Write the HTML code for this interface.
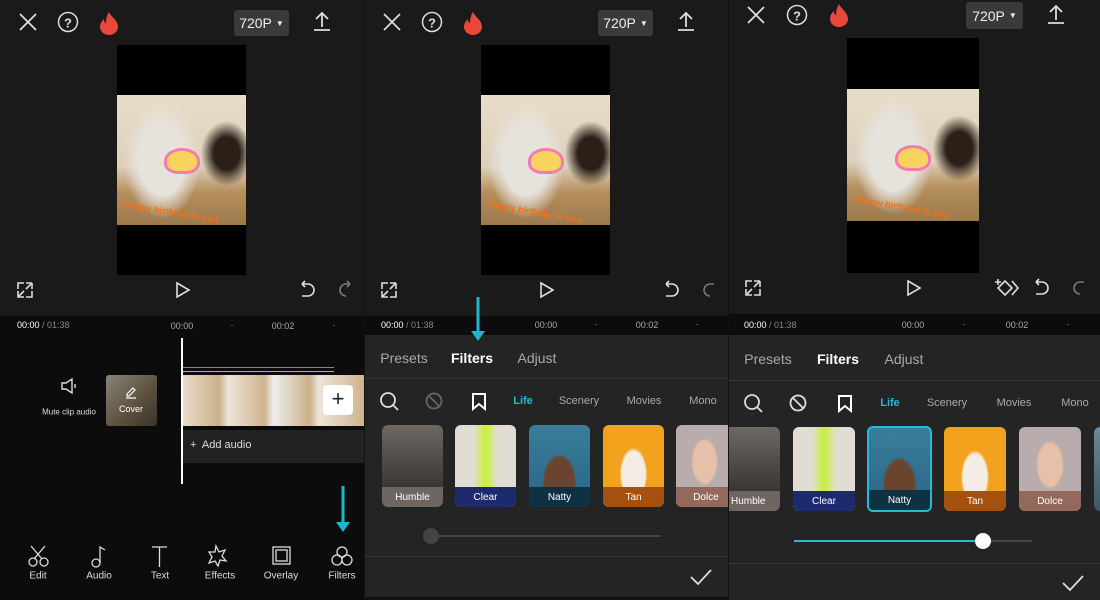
<!DOCTYPE html>
<html><head><meta charset="utf-8"><style>
*{margin:0;padding:0;box-sizing:border-box}
body{width:1100px;height:600px;overflow:hidden;background:#1a1a1a;font-family:"Liberation Sans",sans-serif;position:relative;color:#fff}
.a{position:absolute}
.t{position:absolute;white-space:nowrap;transform:translate(-50%,-50%)}
.btn{position:absolute;background:#3a3a3a;border-radius:3px;font-size:14px;color:#eee;display:flex;align-items:center;justify-content:center;gap:4px}
.vid{position:absolute;background:#000}
.img{position:absolute;background:radial-gradient(ellipse 30% 45% at 35% 50%,#e6e2dc 60%,transparent 100%),radial-gradient(ellipse 20% 25% at 85% 45%,#2a2018 50%,transparent 100%),linear-gradient(#e9ddc9 0%,#ddd0bb 55%,#b58e5c 75%,#9c7a4c 100%)}
.cake{position:absolute;width:36px;height:26px;background:#f9d45c;border:3px solid #f27bb0;border-radius:50% 50% 40% 40%}
.hb{position:absolute;font-size:9px;font-weight:bold;color:#f2701c;transform:rotate(10deg);white-space:nowrap}
.th{position:absolute;border-radius:6px;overflow:hidden}
.th .l{position:absolute;left:0;right:0;bottom:0;height:20px;font-size:10px;color:#fff;display:flex;align-items:center;justify-content:center}
.g{color:#aaa}
</style></head><body>

<div class="a" style="left:0;top:316px;width:364px;height:284px;background:#0c0c0c"></div>
<div class="a" style="left:364px;top:316px;width:364px;height:19px;background:#0c0c0c"></div>
<div class="a" style="left:364px;top:335px;width:364px;height:265px;background:#242424"></div>
<div class="a" style="left:728px;top:314px;width:372px;height:21px;background:#0c0c0c"></div>
<div class="a" style="left:728px;top:335px;width:372px;height:265px;background:#242424"></div>
<div class="a" style="left:364px;top:0;width:1px;height:600px;background:#111"></div>
<div class="a" style="left:728px;top:0;width:1px;height:600px;background:#111"></div>

<svg class="a" style="left:0;top:0" width="1100" height="310" fill="none" stroke="#ddd" stroke-width="1.8">
 <g>
  <path d="M20 14l16 16M36 14l-16 16"/>
  <circle cx="68" cy="22" r="9.5" stroke-width="1.5"/>
  <path d="M322 13v14M316 19l6-6 6 6M314 30h16"/>
 </g>
 <g transform="translate(364,0)">
  <path d="M20 14l16 16M36 14l-16 16"/>
  <circle cx="68" cy="22" r="9.5" stroke-width="1.5"/>
  <path d="M322 13v14M316 19l6-6 6 6M314 30h16"/>
 </g>
 <g transform="translate(728,-7)">
  <path d="M20 14l16 16M36 14l-16 16"/>
  <circle cx="69" cy="22" r="9.5" stroke-width="1.5"/>
  <path d="M328 13v14M322 19l6-6 6 6M320 30h16"/>
 </g>
 <g stroke-width="1.6">
  <path d="M18 289v-6h6M32 283v6M26 283h6M18 291v6h6M32 291v6h-6M19 296l5-5M31 284l-5 5"/>
  <path d="M177 283l12 7-12 7z"/>
  <path d="M302 284h6a6 6 0 0 1 0 12h-6M302 284l3-3M302 284l3 3"/>
  <path stroke="#777" d="M350 284h-4a6 6 0 0 0 0 12"/>
  <path d="M350 284l-3-3M350 284l-3 3" stroke="#777"/>
 </g>
 <g stroke-width="1.6" transform="translate(364,0)">
  <path d="M18 289v-6h6M32 283v6M26 283h6M18 291v6h6M32 291v6h-6M19 296l5-5M31 284l-5 5"/>
  <path d="M177 283l12 7-12 7z"/>
  <path d="M302 284h6a6 6 0 0 1 0 12h-6M302 284l3-3M302 284l3 3"/>
  <path stroke="#777" d="M350 284h-4a6 6 0 0 0 0 12"/>
 </g>
 <g stroke-width="1.6" transform="translate(728,-2)">
  <path d="M18 289v-6h6M32 283v6M26 283h6M18 291v6h6M32 291v6h-6M19 296l5-5M31 284l-5 5"/>
  <path d="M180 283l12 7-12 7z"/>
  <path d="M270 290l7-7 7 7-7 7zM284 283l6 7-6 7M270 281v6M267 284h6"/>
  <path d="M308 284h6a6 6 0 0 1 0 12h-6M308 284l3-3M308 284l3 3"/>
  <path stroke="#777" d="M356 284h-4a6 6 0 0 0 0 12"/>
 </g>
</svg>
<div class="t" style="left:68px;top:23px;font-size:13px;color:#ddd;font-weight:bold">?</div>
<div class="t" style="left:432px;top:23px;font-size:13px;color:#ddd;font-weight:bold">?</div>
<div class="t" style="left:797px;top:16px;font-size:13px;color:#ddd;font-weight:bold">?</div>
<svg class="a" style="left:99px;top:11px" width="20" height="24"><path d="M10 1c2 5 9 8 9 15a9 8 0 0 1-18 0c0-4 2-6 4-8 0 3 1 4 2 4 0-4 1-8 3-11z" fill="#e8483a"/></svg>
<svg class="a" style="left:463px;top:11px" width="20" height="24"><path d="M10 1c2 5 9 8 9 15a9 8 0 0 1-18 0c0-4 2-6 4-8 0 3 1 4 2 4 0-4 1-8 3-11z" fill="#e8483a"/></svg>
<svg class="a" style="left:829px;top:3px" width="20" height="24"><path d="M10 1c2 5 9 8 9 15a9 8 0 0 1-18 0c0-4 2-6 4-8 0 3 1 4 2 4 0-4 1-8 3-11z" fill="#e8483a"/></svg>
<div class="btn" style="left:234px;top:10px;width:55px;height:26px">720P <span style="font-size:8px">▼</span></div>
<div class="btn" style="left:598px;top:10px;width:55px;height:26px">720P <span style="font-size:8px">▼</span></div>
<div class="btn" style="left:966px;top:2px;width:57px;height:27px">720P <span style="font-size:8px">▼</span></div>

<div class="vid" style="left:117px;top:45px;width:129px;height:230px"></div>
<div class="img" style="left:117px;top:95px;width:129px;height:130px"></div>
<div class="cake" style="left:164px;top:148px"></div><div class="hb" style="left:124px;top:207px">Happy birthday to you</div>
<div class="vid" style="left:481px;top:45px;width:129px;height:230px"></div>
<div class="img" style="left:481px;top:95px;width:129px;height:130px"></div>
<div class="cake" style="left:528px;top:148px"></div><div class="hb" style="left:488px;top:207px">Happy birthday to you</div>
<div class="vid" style="left:847px;top:38px;width:132px;height:235px"></div>
<div class="img" style="left:847px;top:89px;width:132px;height:132px"></div>
<div class="cake" style="left:895px;top:145px"></div><div class="hb" style="left:855px;top:202px">Happy birthday to you</div>

<div class="a" style="left:17px;top:320px;font-size:9px"><span>00:00</span><span style="color:#888"> / 01:38</span></div>
<div class="t" style="left:182px;top:326px;font-size:9px;color:#aaa">00:00</div>
<div class="t" style="left:232px;top:325px;font-size:9px;color:#aaa">·</div>
<div class="t" style="left:283px;top:326px;font-size:9px;color:#aaa">00:02</div>
<div class="t" style="left:334px;top:325px;font-size:9px;color:#aaa">·</div>
<div class="a" style="left:381px;top:320px;font-size:9px"><span>00:00</span><span style="color:#888"> / 01:38</span></div>
<div class="t" style="left:546px;top:325px;font-size:9px;color:#aaa">00:00</div>
<div class="t" style="left:596px;top:324px;font-size:9px;color:#aaa">·</div>
<div class="t" style="left:647px;top:325px;font-size:9px;color:#aaa">00:02</div>
<div class="t" style="left:697px;top:324px;font-size:9px;color:#aaa">·</div>
<div class="a" style="left:744px;top:320px;font-size:9px"><span>00:00</span><span style="color:#888"> / 01:38</span></div>
<div class="t" style="left:913px;top:325px;font-size:9px;color:#aaa">00:00</div>
<div class="t" style="left:964px;top:324px;font-size:9px;color:#aaa">·</div>
<div class="t" style="left:1017px;top:325px;font-size:9px;color:#aaa">00:02</div>
<div class="t" style="left:1068px;top:324px;font-size:9px;color:#aaa">·</div>

<svg class="a" style="left:60px;top:378px" width="20" height="16" fill="none" stroke="#ddd" stroke-width="1.4"><path d="M2 5h4l6-4v14l-6-4H2z M15 6v4"/></svg>
<div class="t" style="left:69px;top:412px;font-size:8px;color:#ddd">Mute clip audio</div>
<div class="a" style="left:106px;top:375px;width:51px;height:51px;border-radius:3px;background:linear-gradient(135deg,#8a8478,#5b4e3e 60%,#3a3428)"></div>
<svg class="a" style="left:124px;top:385px" width="14" height="14" fill="none" stroke="#fff" stroke-width="1.2"><path d="M3 9l6-6 2 2-6 6H3zM2 13h10"/></svg>
<div class="t" style="left:131px;top:409px;font-size:9px;color:#fff">Cover</div>
<div class="a" style="left:183px;top:367px;width:151px;height:1px;background:#e0604a"></div>
<div class="a" style="left:183px;top:371px;width:151px;height:1px;background:#e8a060"></div>
<div class="a" style="left:183px;top:375px;width:181px;height:51px;background:linear-gradient(90deg,#e9dccb 0,#cbb08a 20%,#ede5da 25%,#cfb38f 45%,#eee 50%,#cbb08a 70%,#ede5da 75%,#cfb38f 100%)"></div>
<div class="a" style="left:323px;top:385px;width:30px;height:30px;background:#fff;border-radius:4px;color:#222;font-size:22px;line-height:28px;text-align:center">+</div>
<div class="a" style="left:183px;top:430px;width:181px;height:33px;background:#222"></div>
<div class="a" style="left:190px;top:439px;font-size:11px;color:#ddd">+&nbsp; Add audio</div>
<div class="a" style="left:181px;top:338px;width:2px;height:146px;background:#fff"></div>

<svg class="a" style="left:334px;top:486px" width="18" height="50"><path d="M9 0v38" stroke="#19b8d2" stroke-width="3"/><path d="M2 36h14l-7 10z" fill="#19b8d2"/></svg>
<svg class="a" style="left:469px;top:297px" width="18" height="48"><path d="M9 0v36" stroke="#19b8d2" stroke-width="3"/><path d="M2 34h14l-7 10z" fill="#19b8d2"/></svg>

<svg class="a" style="left:0;top:540px" width="364" height="30" fill="none" stroke="#ddd" stroke-width="1.3">
 <circle cx="33" cy="22" r="4"/><circle cx="44" cy="22" r="4"/><path d="M31 6l11 13M45 6l-11 13"/>
 <circle cx="96" cy="23" r="4"/><path d="M100 23V7l5 3"/>
 <path d="M152 7h15M159.5 7v20"/>
 <path d="M216 6l3 6 6-2-3 6 4 5-6-1-2 6-3-5-6 2 3-6-3-5 6 0z"/>
 <rect x="273" y="7" width="17" height="17"/><rect x="276" y="10" width="11" height="11"/>
 <circle cx="342" cy="12" r="5"/><circle cx="337" cy="20" r="5"/><circle cx="347" cy="20" r="5"/>
</svg>
<div class="t" style="left:38px;top:576px;font-size:10px;color:#ddd">Edit</div>
<div class="t" style="left:99px;top:576px;font-size:10px;color:#ddd">Audio</div>
<div class="t" style="left:160px;top:576px;font-size:10px;color:#ddd">Text</div>
<div class="t" style="left:220px;top:576px;font-size:10px;color:#ddd">Effects</div>
<div class="t" style="left:281px;top:576px;font-size:10px;color:#ddd">Overlay</div>
<div class="t" style="left:342px;top:576px;font-size:10px;color:#ddd">Filters</div>

<div class="t g" style="left:404px;top:358px;font-size:14px">Presets</div>
<div class="t" style="left:472px;top:358px;font-size:14px;font-weight:bold">Filters</div>
<div class="t g" style="left:537px;top:358px;font-size:14px">Adjust</div>
<div class="a" style="left:364px;top:378px;width:364px;height:1px;background:#333"></div>
<svg class="a" style="left:364px;top:388px" width="364" height="26" fill="none" stroke-width="1.8">
 <circle cx="24" cy="12" r="7" stroke="#ddd"/><path d="M29 17l5 5" stroke="#ddd"/>
 <circle cx="70" cy="13" r="7.5" stroke="#666"/><path d="M65 8l10 10" stroke="#666"/>
 <path d="M109 6h12v15l-6-5-6 5z" stroke="#fff" stroke-width="2"/>
</svg>
<div class="t" style="left:523px;top:401px;font-size:11px;font-weight:bold;color:#22bcd6">Life</div>
<div class="t g" style="left:579px;top:401px;font-size:11px">Scenery</div>
<div class="t g" style="left:644px;top:401px;font-size:11px">Movies</div>
<div class="t g" style="left:703px;top:401px;font-size:11px">Mono</div>

<div class="th" style="left:382px;top:425px;width:61px;height:82px;background:linear-gradient(#6d6862,#2a2624)"><div class="l" style="background:#6f6661">Humble</div></div>
<div class="th" style="left:455px;top:425px;width:61px;height:82px;background:linear-gradient(90deg,#e2ddd4 30%,#c8f03a 50%,#e2ddd4 70%)"><div class="l" style="background:#1e2a6e">Clear</div></div>
<div class="th" style="left:529px;top:425px;width:61px;height:82px;background:radial-gradient(ellipse 40% 50% at 50% 70%,#6b4430 60%,transparent 70%),linear-gradient(#3a7d9c,#2b6584)"><div class="l" style="background:#0e3244">Natty</div></div>
<div class="th" style="left:603px;top:425px;width:61px;height:82px;background:radial-gradient(ellipse 35% 50% at 50% 60%,#f3ede5 55%,transparent 65%),#f3a21d"><div class="l" style="background:#a4510f">Tan</div></div>
<div class="th" style="left:676px;top:425px;width:52px;height:82px;border-radius:6px 0 0 6px;background:radial-gradient(ellipse 40% 45% at 55% 45%,#e6c0a8 55%,transparent 65%),#b8acac"><div class="l" style="background:#94685a;padding-left:8px">Dolce</div></div>
<div class="a" style="left:431px;top:535px;width:230px;height:2px;background:#444"></div>
<div class="a" style="left:423px;top:528px;width:16px;height:16px;border-radius:50%;background:#444"></div>
<div class="a" style="left:364px;top:556px;width:364px;height:1px;background:#333"></div>
<svg class="a" style="left:688px;top:568px" width="26" height="18" fill="none" stroke="#ddd" stroke-width="1.8"><path d="M3 9l7 7L23 2"/></svg>
<div class="a" style="left:364px;top:597px;width:364px;height:3px;background:#111"></div>

<div class="t g" style="left:768px;top:359px;font-size:14px">Presets</div>
<div class="t" style="left:838px;top:359px;font-size:14px;font-weight:bold">Filters</div>
<div class="t g" style="left:904px;top:359px;font-size:14px">Adjust</div>
<div class="a" style="left:728px;top:380px;width:372px;height:1px;background:#333"></div>
<svg class="a" style="left:728px;top:390px" width="372" height="26" fill="none" stroke-width="1.8">
 <circle cx="24" cy="12" r="7" stroke="#ddd"/><path d="M29 17l5 5" stroke="#ddd"/>
 <circle cx="70" cy="13" r="7.5" stroke="#ddd"/><path d="M65 8l10 10" stroke="#ddd"/>
 <path d="M111 6h12v15l-6-5-6 5z" stroke="#fff" stroke-width="2"/>
</svg>
<div class="t" style="left:890px;top:403px;font-size:11px;font-weight:bold;color:#22bcd6">Life</div>
<div class="t g" style="left:947px;top:403px;font-size:11px">Scenery</div>
<div class="t g" style="left:1014px;top:403px;font-size:11px">Movies</div>
<div class="t g" style="left:1075px;top:403px;font-size:11px">Mono</div>

<div class="th" style="left:729px;top:427px;width:51px;height:84px;border-radius:0 6px 6px 0;background:linear-gradient(#6d6862,#2a2624)"><div class="l" style="background:#6f6661;justify-content:flex-start;padding-left:2px">Humble</div></div>
<div class="th" style="left:793px;top:427px;width:62px;height:84px;background:linear-gradient(90deg,#e2ddd4 30%,#c8f03a 50%,#e2ddd4 70%)"><div class="l" style="background:#1e2a6e">Clear</div></div>
<div class="th" style="left:867px;top:426px;width:65px;height:86px;border:2px solid #22bcd6;background:radial-gradient(ellipse 40% 50% at 50% 70%,#6b4430 60%,transparent 70%),linear-gradient(#3a7d9c,#2b6584)"><div class="l" style="background:#0e3244">Natty</div></div>
<div class="th" style="left:944px;top:427px;width:62px;height:84px;background:radial-gradient(ellipse 35% 50% at 50% 60%,#f3ede5 55%,transparent 65%),#f3a21d"><div class="l" style="background:#a4510f">Tan</div></div>
<div class="th" style="left:1019px;top:427px;width:62px;height:84px;background:radial-gradient(ellipse 35% 45% at 50% 45%,#e6c0a8 55%,transparent 65%),#b8acac"><div class="l" style="background:#94685a">Dolce</div></div>
<div class="th" style="left:1094px;top:427px;width:20px;height:84px;background:linear-gradient(#6a8a9a,#3a5868)"></div>
<div class="a" style="left:794px;top:540px;width:238px;height:2px;background:#444"></div>
<div class="a" style="left:794px;top:540px;width:189px;height:2px;background:#22bcd6"></div>
<div class="a" style="left:975px;top:533px;width:16px;height:16px;border-radius:50%;background:#fff"></div>
<div class="a" style="left:728px;top:563px;width:372px;height:1px;background:#333"></div>
<svg class="a" style="left:1060px;top:574px" width="26" height="18" fill="none" stroke="#ddd" stroke-width="1.8"><path d="M3 9l7 7L23 2"/></svg>
</body></html>
